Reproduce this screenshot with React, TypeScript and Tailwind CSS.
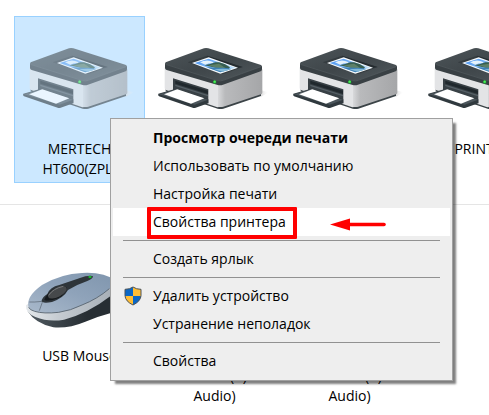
import { Fragment, type ReactNode } from 'react';
import clsx from 'clsx';

interface Device {
    id: string;
    lines: string[];
    icon?: ReactNode;
    selected?: boolean;
}

interface MenuEntry {
    label: string;
    bold?: boolean;
    shield?: boolean;
    active?: boolean;
}

function PrinterIcon() {
    return (
        <svg viewBox="15 36 357 252" className="w-[119px] h-[84px]" aria-hidden="true">
            <defs>
                <linearGradient id="lid" x1="0" y1="0" x2="1" y2="1">
                    <stop offset="0" stopColor="#4d5559" />
                    <stop offset="0.5" stopColor="#3f464a" />
                    <stop offset="1" stopColor="#50585c" />
                </linearGradient>
                <linearGradient id="side" x1="0" y1="0" x2="1" y2="0">
                    <stop offset="0" stopColor="#d8d9db" />
                    <stop offset="0.16" stopColor="#b9babc" />
                    <stop offset="1" stopColor="#a5a6a8" />
                </linearGradient>
                <linearGradient id="cast" x1="0" y1="0" x2="1" y2="0">
                    <stop offset="0" stopColor="#d4d4d4" />
                    <stop offset="1" stopColor="#ffffff" stopOpacity="0" />
                </linearGradient>
                <linearGradient id="sky" x1="0" y1="0" x2="1" y2="0.6">
                    <stop offset="0" stopColor="#3f8df0" />
                    <stop offset="1" stopColor="#bfe0fa" />
                </linearGradient>
            </defs>
            <path d="M330 180 L357 187 L333 200 Z" fill="url(#cast)" />
            <path d="M47 176 L205 228 Q212 231 220 228 L333 190 V198 L220 236 Q212 238 203 236 L47 184 Z" fill="#3b4347" />
            <path d="M44 112 L206 160 V231 Q204 232 200 231 L48 180 Q44 178 44 174 Z" fill="#e3e4e6" />
            <path d="M204 160 H218 L337 118 V188 Q337 191 333 193 L220 230 Q211 232 204 231 Z" fill="url(#side)" />
            <path d="M45 100 V114 Q45 118 50 120 L203 165 Q211 167 219 164 L332 124 Q336 122 336 118 V108 Z" fill="#394044" />
            <path d="M49 96 L162 55 Q168 53 175 55 L331 104 Q339 107 331 111 L220 150 Q211 153 203 151 L49 103 Q42 99 49 96 Z" fill="url(#lid)" />
            <path d="M46 103 L203 152 Q211 154 220 151 L336 109" fill="none" stroke="#5c6468" strokeWidth="1.5" />
            <path d="M113 97 L171 77 L278 111 L220 132 Z" fill="#353c40" />
            <path d="M171 77 L278 111 L262 114 L175 88 Z" fill="#252c30" />
            <path d="M126 99 L176 82 L264 113 L211 131 Z" fill="#f6fafc" />
            <path d="M134 99 L176 86 L257 113 L211 127 Z" fill="url(#sky)" />
            <path d="M150 97 Q163 90 177 92 Q190 94 190 99 Q176 98 166 104 Z" fill="#e5f2fb" />
            <path d="M163 106 Q182 103 196 97 L207 97 L224 102 L240 112 L232 121 Z" fill="#375e51" />
            <path d="M176 106 L207 101 L226 114 L214 119 Z" fill="#5d8067" />
            <path d="M169 112 L232 114 L244 117 L211 127 Z" fill="#3e80b5" />
            <path d="M192 118 L218 116 L242 118 L218 125 Z" fill="#83b9d8" />
            <circle cx="194" cy="156" r="5" fill="#18aa35" />
            <circle cx="194" cy="155" r="3.5" fill="#51ed59" />
            <path d="M69 145 L175 178 V220 L69 187 Z" fill="#394146" />
            <path d="M76 152 L174 182 V192 L76 161 Z" fill="#20282d" />
            <path d="M76 164 L174 195 V199 L76 168 Z" fill="#566067" />
            <path d="M25 191 L78 176 L175 208 V220 L137 233 Q133 235 128 233 L27 199 Q23 196 25 191 Z" fill="#30393e" />
            <path d="M27 193 L78 178 L174 209 L134 224 Z" fill="#4b555b" />
            <path d="M42 193 L82 178 L163 205 L123 221 Z" fill="#ffffff" />
        </svg>
    );
}

function MouseIcon() {
    return (
        <svg viewBox="60 -18 357 252" className="w-[119px] h-[84px]" aria-hidden="true">
            <defs>
                <linearGradient id="mouse-top" x1="0" y1="1" x2="1" y2="0">
                    <stop offset="0" stopColor="#a9b9cb" />
                    <stop offset="0.5" stopColor="#8fa3ba" />
                    <stop offset="1" stopColor="#7f95ad" />
                </linearGradient>
                <linearGradient id="mouse-rim" x1="0" y1="0" x2="1" y2="0">
                    <stop offset="0" stopColor="#e4e8eb" />
                    <stop offset="0.35" stopColor="#c5cbd1" />
                    <stop offset="1" stopColor="#a3abb3" />
                </linearGradient>
                <linearGradient id="mouse-base" x1="0" y1="0" x2="1" y2="0">
                    <stop offset="0" stopColor="#505a61" />
                    <stop offset="0.6" stopColor="#272e33" />
                </linearGradient>
            </defs>
            <path d="M83 169 Q106 206 160 217 Q206 221 256 200 Q296 184 340 172 L380 150 V90 L330 100 Z" fill="url(#mouse-base)" />
            <path d="M78 151 Q76 174 106 186 Q146 202 192 194 Q262 177 335 121 L360 90 L110 130 Z" fill="url(#mouse-rim)" />
            <path d="M86 157 Q76 126 126 90 Q184 56 246 54 Q310 50 350 78 Q350 90 328 101 Q292 132 246 150 Q212 167 176 172 Q130 177 104 169 Q89 165 86 157 Z" fill="url(#mouse-top)" />
            <path d="M86 157 Q89 165 104 169 Q130 177 176 172 Q212 167 246 150 Q292 132 328 101" fill="none" stroke="#525e69" strokeWidth="2.5" />
            <path d="M88 141 Q100 142 128 139 L118 167" fill="none" stroke="#56616d" strokeWidth="2" />
            <path d="M125 136 Q128 126 142 117 Q150 96 178 90 Q226 74 256 64 Q274 60 279 64 Q280 70 262 78 Q232 88 204 105 Q192 128 156 141 Q124 147 125 136 Z" fill="#2e353a" />
            <path d="M133 134 Q140 116 160 102 Q190 88 201 98 Q200 116 174 130 Q144 141 133 134 Z" fill="#15191c" />
            <ellipse cx="172" cy="112" rx="31" ry="14" transform="rotate(-27 172 112)" fill="#46494b" />
            <path d="M146 121 Q160 100 190 94" fill="none" stroke="#77797b" strokeWidth="3" />
            <ellipse cx="270" cy="66" rx="5" ry="3.5" fill="#18b52c" />
        </svg>
    );
}

function ShieldIcon() {
    return (
        <svg viewBox="0 0 54 60" className="w-[18px] h-5" aria-hidden="true">
            <clipPath id="shield">
                <path d="M27 3 Q37 10 51 10 V29 Q50 46 27 57 Q4 46 3 29 V10 Q17 10 27 3 Z" />
            </clipPath>
            <g clipPath="url(#shield)">
                <path d="M0 0 H27 V30 H0 Z M27 30 H54 V60 H27 Z" fill="#0b67c5" />
                <path d="M27 0 H54 V30 H27 Z M0 30 H27 V60 H0 Z" fill="#ffbd35" />
            </g>
            <path d="M27 3 Q37 10 51 10 V29 Q50 46 27 57 Q4 46 3 29 V10 Q17 10 27 3 Z" fill="none" stroke="#4c5357" strokeWidth="3" />
        </svg>
    );
}

const printers: Device[] = [
    { id: 'ht600', lines: ['MERTECH', 'HT600(ZPL)'], icon: <PrinterIcon />, selected: true },
    { id: 'printer-2', lines: [], icon: <PrinterIcon /> },
    { id: 'printer-3', lines: [], icon: <PrinterIcon /> },
    { id: 'printer-4', lines: ['PRINTER-'], icon: <PrinterIcon /> },
];

const devices: Device[] = [
    { id: 'mouse', lines: ['USB Mouse'], icon: <MouseIcon /> },
    { id: 'audio-1', lines: ['', 'Realtek(R)', 'Audio)'] },
    { id: 'audio-2', lines: ['', 'Realtek(R)', 'Audio)'] },
];

const menuGroups: MenuEntry[][] = [
    [
        { label: 'Просмотр очереди печати', bold: true },
        { label: 'Использовать по умолчанию' },
        { label: 'Настройка печати' },
        { label: 'Свойства принтера', active: true },
    ],
    [{ label: 'Создать ярлык' }],
    [{ label: 'Удалить устройство', shield: true }, { label: 'Устранение неполадок' }],
    [{ label: 'Свойства' }],
];

function DeviceTile({ device }: { device: Device }) {
    return (
        <button
            type="button"
            className={clsx(
                'flex w-[131px] shrink-0 flex-col items-center border pt-[25px] pb-[3px]',
                device.selected ? 'border-[#99d1ff] bg-[#cce8ff]' : 'border-transparent'
            )}
        >
            <span className={clsx('block h-[84px]', device.selected && 'opacity-60')}>{device.icon}</span>
            <span className="mt-[13px] block text-sm leading-5 text-black">
                {device.lines.map((line, i) => (
                    <span key={i} className="block h-5 whitespace-nowrap">{line}</span>
                ))}
            </span>
        </button>
    );
}

function ContextMenu() {
    return (
        <div
            role="menu"
            className="absolute left-[110px] top-[118px] w-[343px] border border-[#a0a0a0] bg-[#eeeeee] px-0.5 py-[5px] shadow-[4px_4px_2px_-1px_rgba(0,0,0,0.5)]"
        >
            {menuGroups.map((group, i) => (
                <Fragment key={i}>
                    {i > 0 && <div role="separator" className="mx-2.5 my-1 h-px bg-[#919191]" />}
                    {group.map(entry => (
                        <button
                            key={entry.label}
                            type="button"
                            role="menuitem"
                            className={clsx(
                                'flex h-7 w-full items-center pl-[11px] text-left text-sm leading-5 text-black',
                                entry.bold && 'font-bold',
                                entry.active && 'bg-white'
                            )}
                        >
                            <span className="w-[29px] shrink-0">{entry.shield && <ShieldIcon />}</span>
                            <span className="relative whitespace-nowrap">
                                {entry.label}
                                {entry.active && (
                                    <span className="absolute -left-1.5 -top-[5px] h-8 w-[150px] rounded-[1px] border-4 border-[#ff0000]" />
                                )}
                            </span>
                            {entry.active && (
                                <svg viewBox="0 0 56 20" className="ml-auto mr-16 h-5 w-14" aria-hidden="true">
                                    <path d="M0 12.5 L20 6.5 V18.5 Z" fill="#ff0000" />
                                    <path d="M18 12.5 H54" stroke="#ff0000" strokeWidth="3.6" strokeLinecap="round" />
                                </svg>
                            )}
                        </button>
                    ))}
                </Fragment>
            ))}
        </div>
    );
}

export default function App() {
    return (
        <main className="relative min-h-screen overflow-hidden bg-white pt-4 font-['Open_Sans','Noto_Sans',sans-serif]">
            <section className="flex gap-1 pl-3.5">
                {printers.map(device => <DeviceTile key={device.id} device={device} />)}
            </section>
            <hr className="mt-[21px] border-[#e5e5e5]" />
            <section className="mt-[18px] flex gap-1 pl-3.5">
                {devices.map(device => <DeviceTile key={device.id} device={device} />)}
            </section>
            <ContextMenu />
        </main>
    );
}
